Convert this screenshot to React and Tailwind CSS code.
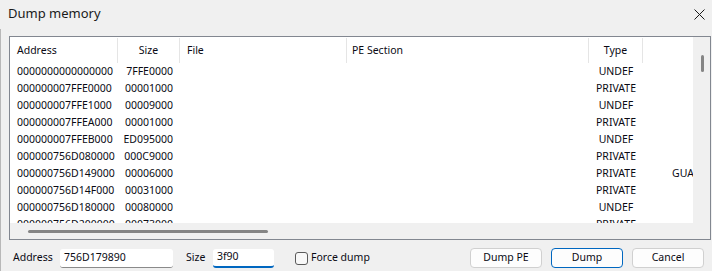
import React from 'react';

const rows = [
  ['0000000000000000', '7FFE0000', 'UNDEF', ''],
  ['000000007FFE0000', '00001000', 'PRIVATE', ''],
  ['000000007FFE1000', '00009000', 'UNDEF', ''],
  ['000000007FFEA000', '00001000', 'PRIVATE', ''],
  ['000000007FFEB000', 'ED095000', 'UNDEF', ''],
  ['000000756D080000', '000C9000', 'PRIVATE', ''],
  ['000000756D149000', '00006000', 'PRIVATE', 'GUARD'],
  ['000000756D14F000', '00031000', 'PRIVATE', ''],
  ['000000756D180000', '00080000', 'UNDEF', ''],
  ['000000756D200000', '00073000', 'PRIVATE', ''],
];

const cols = 'grid grid-cols-[108px_62px_167px_242px_54px_120px]';

function Header() {
  const cell = 'h-[25px] flex items-center border-r border-[#e5e5e5]';
  return (
    <div className={`${cols} pt-px`}>
      <div className={`${cell} pl-[7px]`}>Address</div>
      <div className={`${cell} justify-center`}>Size</div>
      <div className={`${cell} pl-[7px]`}>File</div>
      <div className={`${cell} pl-[5px]`}>PE Section</div>
      <div className={`${cell} justify-center`}>Type</div>
      <div className="h-[25px]" />
    </div>
  );
}

export default function App() {
  return (
    <div className="w-[712px] h-[271px] bg-[#f0f0f0] overflow-hidden text-[10.5px] text-[#0a0a14] font-['Noto_Sans',sans-serif]">
      <div className="h-[29px] flex items-center justify-between pl-[8px] pr-[6px]">
        <span className="text-[13px] text-[#1a1a1a] -mt-[1px]">Dump memory</span>
        <svg width="11" height="11" viewBox="0 0 11 11" className="mr-[1px]">
          <path d="M0.5 0.5 L10.5 10.5 M10.5 0.5 L0.5 10.5" stroke="#1a1a1a" strokeWidth="1" fill="none" />
        </svg>
      </div>
      <div className="border-l border-[#b8b8b8] h-[242px] pt-[7px]">
        <div className="ml-[8px] mr-px h-[204px] border border-[#828790] flex flex-col">
          <div className="flex flex-1 min-h-0">
            <div className="w-[683px] bg-white overflow-hidden">
              <div className="w-[760px]">
                <Header />
                {rows.map((r, i) => (
                  <div key={i} className={`${cols} h-[17px] items-center leading-[17px]`}>
                    <div className="pl-[7px] whitespace-nowrap">{r[0]}</div>
                    <div className="text-right pr-[7px]">{r[1]}</div>
                    <div />
                    <div />
                    <div className="text-center">{r[2]}</div>
                    <div className="pl-[29px]">{r[3]}</div>
                  </div>
                ))}
              </div>
            </div>
            <div className="flex-1 bg-[#f0f0f0] pt-[18px] flex justify-center">
              <div className="w-[3px] h-[17px] rounded-full bg-[#858585] ml-px" />
            </div>
          </div>
          <div className="h-[16px] flex items-center">
            <div className="ml-[18px] w-[240px] h-[3px] rounded-full bg-[#858585] mt-[1px]" />
          </div>
        </div>
        <div className="mt-[8px] h-[20px] flex items-center">
          <span className="ml-[12px] w-[47px]">Address</span>
          <div className="w-[113px] h-[19px] bg-white rounded-[3px] border-b border-[#8a8a8a] flex items-center pl-[4px]">756D179890</div>
          <span className="ml-[13px] w-[27px]">Size</span>
          <div className="w-[61px] h-[19px] bg-white rounded-[3px] border-b-2 border-[#0067c0] flex items-center pl-[4px]">3f90</div>
          <div className="ml-[21px] w-[13px] h-[13px] rounded-[3px] border border-[#5a5a5a] bg-[#f8f8f8]" />
          <span className="ml-[3px]">Force dump</span>
          <div className="ml-auto mr-[8px] flex gap-[9px]">
            <div className="w-[72px] h-[20px] rounded-[4px] border border-[#d0d0d0] bg-[#fdfdfd] flex items-center justify-center">Dump PE</div>
            <div className="w-[72px] h-[20px] rounded-[4px] border border-[#0067c0] bg-[#fdfdfd] flex items-center justify-center">Dump</div>
            <div className="w-[72px] h-[20px] rounded-[4px] border border-[#d0d0d0] bg-[#fdfdfd] flex items-center justify-center">Cancel</div>
          </div>
        </div>
      </div>
    </div>
  );
}
